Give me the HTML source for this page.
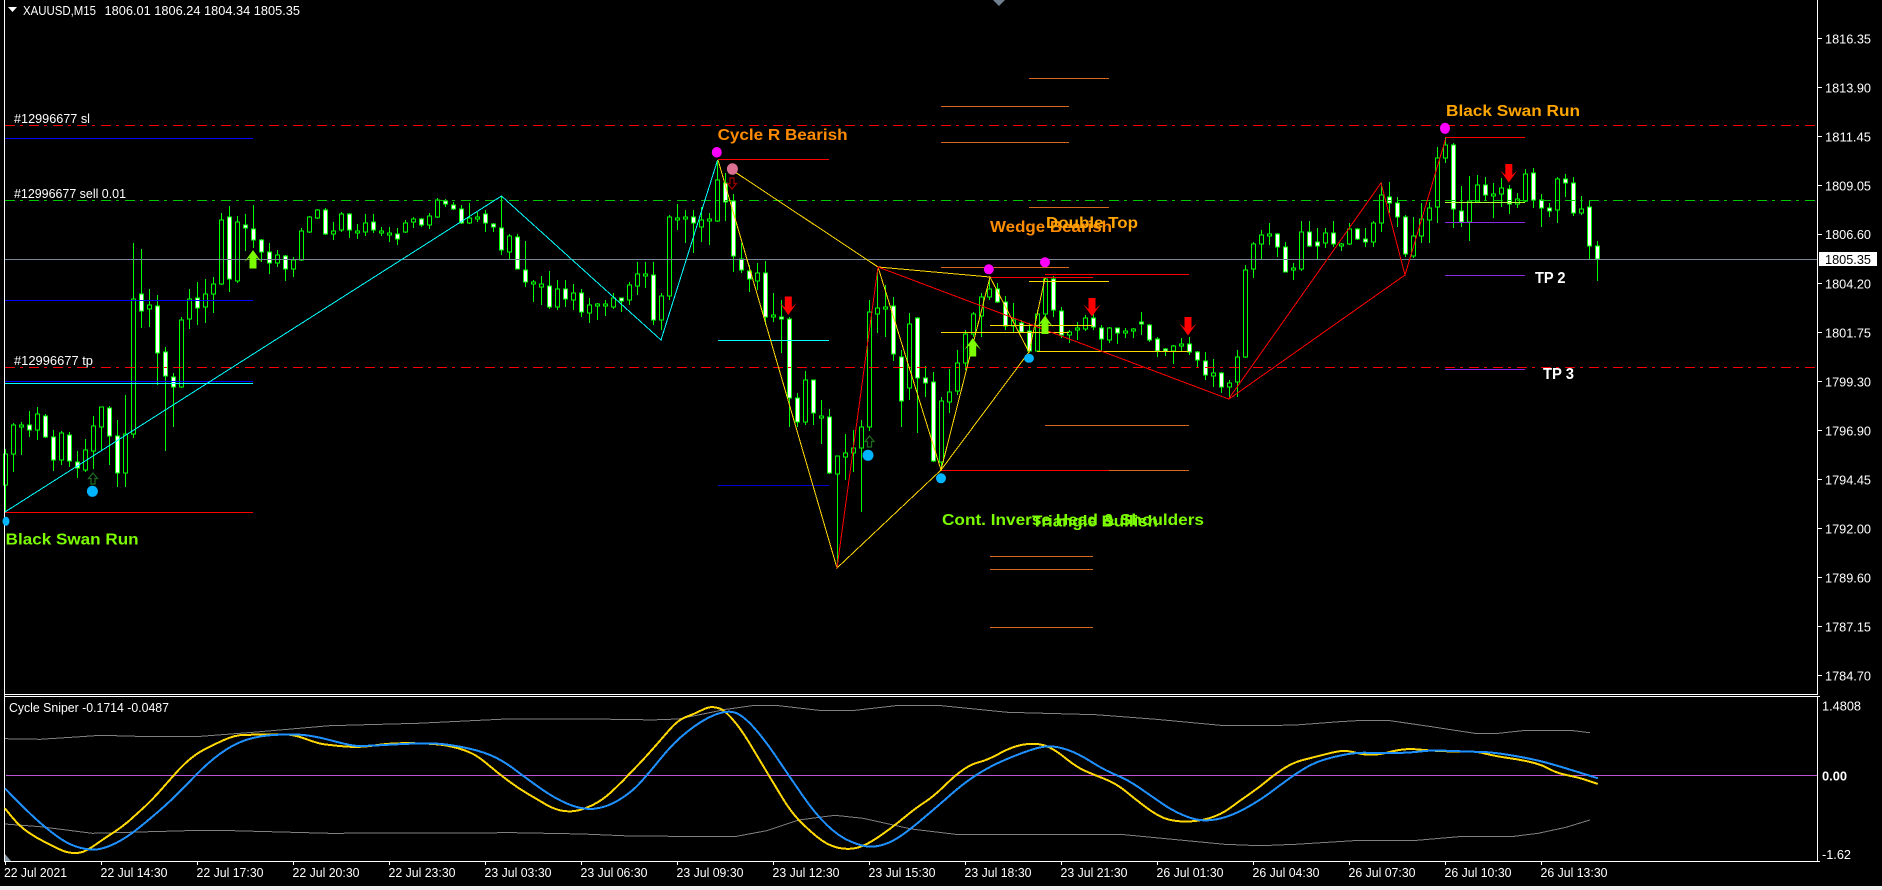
<!DOCTYPE html>
<html><head><meta charset="utf-8"><title>XAUUSD,M15</title>
<style>
html,body{margin:0;padding:0;background:#000;width:1882px;height:890px;overflow:hidden}
svg{display:block;position:absolute;left:0;top:0}
text{font-family:"Liberation Sans",sans-serif;font-size:13px;fill:#fff}
.b{font-weight:bold;font-size:15.5px}
</style></head><body>
<svg width="1882" height="890" viewBox="0 0 1882 890" xmlns="http://www.w3.org/2000/svg">
<rect width="1882" height="890" fill="#000"/>
<rect x="0" y="886" width="1882" height="4" fill="#f0f0f0"/>
<g shape-rendering="crispEdges" fill="none">
<!-- candle wicks -->
<path stroke="#00ff00" d="M5.5 449V512M13.5 423V472M21.5 422V455M29.5 411V437M37.5 407V440M45.5 414V438M53.5 430V471M61.5 431V465M69.5 432V467M77.5 451V478M85.5 439V472M93.5 416V469M101.5 407V450M109.5 406V465M117.5 420V487M125.5 395V487M133.5 243V438M141.5 249V328M149.5 289V327M157.5 295V385M165.5 347V451M173.5 373V427M181.5 317V388M189.5 289V329M197.5 282V325M205.5 279V323M213.5 277V313M221.5 213V285M229.5 206V292M237.5 216V283M245.5 214V251M253.5 205V248M261.5 239V262M269.5 243V274M277.5 250V267M285.5 255V281M293.5 257V277M301.5 228V261M309.5 216V233M317.5 209V219M325.5 208V235M333.5 222V240M341.5 212V232M349.5 213V238M357.5 224V239M365.5 214V236M373.5 214V233M381.5 227V236M389.5 227V242M397.5 228V245M405.5 220V233M413.5 217V228M421.5 218V227M429.5 213V229M437.5 198V218M445.5 199V207M453.5 202V210M461.5 205V224M469.5 203V224M477.5 212V222M485.5 210V232M493.5 223V232M501.5 196V255M509.5 234V259M517.5 234V269M525.5 241V287M533.5 280V302M541.5 276V305M549.5 271V309M557.5 280V310M565.5 280V307M573.5 284V310M581.5 289V317M589.5 298V323M597.5 303V320M605.5 300V316M613.5 293V309M621.5 298V312M629.5 282V305M637.5 262V295M645.5 262V288M653.5 262V325M661.5 293V330M669.5 215V300M677.5 204V230M685.5 210V243M693.5 210V253M701.5 207V242M709.5 213V245M717.5 160V222M725.5 173V221M733.5 194V272M741.5 243V273M749.5 265V292M757.5 263V290M765.5 261V325M773.5 293V322M781.5 300V353M789.5 317V427M797.5 393V427M805.5 371V425M813.5 380V425M821.5 400V444M829.5 409V474M837.5 456V567M845.5 434V480M853.5 430V472M861.5 420V512M869.5 300V431M877.5 272V333M885.5 285V337M893.5 297V361M901.5 350V427M909.5 313V400M917.5 317V433M925.5 366V397M933.5 372V462M941.5 397V470M949.5 369V413M957.5 350V395M965.5 330V370M973.5 312V337M981.5 293V337M989.5 278V300M997.5 283V303M1005.5 296V330M1013.5 303V333M1021.5 320V333M1029.5 323V352M1037.5 310V352M1045.5 278V320M1053.5 276V317M1061.5 307V338M1069.5 330V343M1077.5 322V340M1085.5 315V331M1093.5 300V330M1101.5 325V352M1109.5 327V343M1117.5 328V344M1125.5 328V338M1133.5 328V338M1141.5 312V335M1149.5 324V342M1157.5 337V357M1165.5 348V356M1173.5 345V364M1181.5 338V352M1189.5 337V355M1197.5 351V367M1205.5 352V380M1213.5 359V387M1221.5 372V393M1229.5 380V399M1237.5 350V397M1245.5 265V358M1253.5 242V278M1261.5 230V260M1269.5 223V245M1277.5 233V257M1285.5 242V272M1293.5 263V280M1301.5 221V271M1309.5 221V247M1317.5 228V259M1325.5 228V248M1333.5 221V247M1341.5 243V251M1349.5 223V245M1357.5 228V240M1365.5 228V247M1373.5 221V247M1381.5 183V232M1389.5 182V213M1397.5 197V227M1405.5 215V257M1413.5 217V258M1421.5 203V243M1429.5 202V243M1437.5 147V223M1445.5 138V163M1453.5 143V228M1461.5 186V227M1469.5 176V241M1477.5 175V203M1485.5 177V200M1493.5 183V218M1501.5 178V207M1509.5 185V214M1517.5 193V208M1525.5 169V202M1533.5 168V208M1541.5 194V227M1549.5 203V217M1557.5 177V223M1565.5 174V197M1573.5 177V216M1581.5 196V215M1589.5 200V259M1597.5 241V281"/>
<!-- bull bodies -->
<path stroke="#00ff00" fill="#000" d="M3.5 454h4v31h-4zM11.5 425h4v29h-4zM19.5 425h4v2h-4zM35.5 414h4v16h-4zM59.5 433h4v27h-4zM83.5 450h4v20h-4zM91.5 426h4v25h-4zM99.5 407h4v20h-4zM123.5 434h4v39h-4zM131.5 299h4v135h-4zM147.5 305h4v4h-4zM179.5 320h4v67h-4zM187.5 299h4v20h-4zM203.5 294h4v13h-4zM211.5 284h4v10h-4zM219.5 220h4v64h-4zM235.5 222h4v59h-4zM275.5 255h4v8h-4zM291.5 260h4v9h-4zM299.5 231h4v29h-4zM307.5 217h4v15h-4zM315.5 210h4v8h-4zM331.5 231h4v3h-4zM339.5 214h4v16h-4zM355.5 231h4v2h-4zM363.5 223h4v9h-4zM379.5 231h4v2h-4zM387.5 233h4v2h-4zM403.5 223h4v9h-4zM411.5 219h4v3h-4zM427.5 216h4v9h-4zM435.5 200h4v17h-4zM467.5 218h4v5h-4zM475.5 217h4v2h-4zM507.5 236h4v16h-4zM531.5 282h4v2h-4zM539.5 284h4v3h-4zM555.5 289h4v18h-4zM571.5 293h4v7h-4zM587.5 305h4v8h-4zM595.5 304h4v2h-4zM603.5 304h4v2h-4zM611.5 298h4v9h-4zM627.5 285h4v15h-4zM635.5 274h4v12h-4zM643.5 274h4v2h-4zM659.5 296h4v24h-4zM667.5 217h4v79h-4zM675.5 218h4v2h-4zM683.5 217h4v2h-4zM699.5 220h4v7h-4zM707.5 219h4v2h-4zM715.5 180h4v41h-4zM755.5 273h4v8h-4zM771.5 315h4v2h-4zM803.5 380h4v42h-4zM819.5 416h4v2h-4zM835.5 456h4v18h-4zM843.5 453h4v4h-4zM851.5 448h4v5h-4zM859.5 427h4v21h-4zM867.5 312h4v115h-4zM875.5 308h4v6h-4zM883.5 307h4v2h-4zM907.5 324h4v64h-4zM939.5 401h4v61h-4zM947.5 392h4v10h-4zM955.5 363h4v28h-4zM963.5 334h4v29h-4zM971.5 314h4v20h-4zM979.5 297h4v19h-4zM987.5 289h4v8h-4zM1011.5 320h4v6h-4zM1035.5 314h4v37h-4zM1043.5 279h4v35h-4zM1067.5 332h4v3h-4zM1075.5 328h4v2h-4zM1083.5 318h4v11h-4zM1107.5 328h4v12h-4zM1123.5 331h4v2h-4zM1131.5 329h4v2h-4zM1171.5 346h4v5h-4zM1179.5 344h4v2h-4zM1211.5 373h4v3h-4zM1227.5 383h4v4h-4zM1235.5 357h4v25h-4zM1243.5 270h4v87h-4zM1251.5 244h4v25h-4zM1259.5 235h4v9h-4zM1267.5 234h4v2h-4zM1291.5 268h4v2h-4zM1299.5 232h4v37h-4zM1323.5 233h4v10h-4zM1339.5 244h4v2h-4zM1347.5 229h4v15h-4zM1371.5 223h4v19h-4zM1379.5 195h4v28h-4zM1411.5 236h4v20h-4zM1419.5 219h4v17h-4zM1427.5 208h4v12h-4zM1435.5 158h4v49h-4zM1443.5 145h4v13h-4zM1467.5 201h4v21h-4zM1475.5 185h4v17h-4zM1491.5 194h4v2h-4zM1499.5 188h4v6h-4zM1515.5 199h4v5h-4zM1523.5 174h4v27h-4zM1555.5 179h4v31h-4zM1579.5 209h4v4h-4z"/>
<!-- bear bodies -->
<path stroke="#00ff00" fill="#fff" d="M27.5 425h4v5h-4zM43.5 416h4v21h-4zM51.5 437h4v23h-4zM67.5 435h4v26h-4zM75.5 462h4v6h-4zM107.5 408h4v28h-4zM115.5 436h4v37h-4zM139.5 294h4v17h-4zM155.5 306h4v47h-4zM163.5 352h4v24h-4zM171.5 377h4v10h-4zM195.5 298h4v10h-4zM227.5 217h4v62h-4zM243.5 225h4v3h-4zM251.5 229h4v11h-4zM259.5 240h4v12h-4zM267.5 252h4v11h-4zM283.5 256h4v13h-4zM323.5 210h4v24h-4zM347.5 214h4v16h-4zM371.5 222h4v8h-4zM395.5 234h4v5h-4zM419.5 219h4v6h-4zM443.5 201h4v3h-4zM451.5 205h4v4h-4zM459.5 209h4v14h-4zM483.5 214h4v9h-4zM491.5 224h4v3h-4zM499.5 228h4v22h-4zM515.5 237h4v32h-4zM523.5 270h4v12h-4zM547.5 286h4v21h-4zM563.5 289h4v10h-4zM579.5 293h4v19h-4zM619.5 298h4v3h-4zM651.5 275h4v45h-4zM691.5 217h4v6h-4zM723.5 183h4v19h-4zM731.5 201h4v55h-4zM739.5 259h4v11h-4zM747.5 271h4v8h-4zM763.5 273h4v44h-4zM779.5 317h4v2h-4zM787.5 319h4v79h-4zM795.5 398h4v24h-4zM811.5 380h4v33h-4zM827.5 417h4v56h-4zM891.5 306h4v48h-4zM899.5 357h4v44h-4zM915.5 318h4v60h-4zM923.5 378h4v5h-4zM931.5 382h4v79h-4zM995.5 289h4v13h-4zM1003.5 302h4v24h-4zM1019.5 323h4v9h-4zM1027.5 331h4v20h-4zM1051.5 279h4v31h-4zM1059.5 311h4v24h-4zM1091.5 318h4v9h-4zM1099.5 328h4v11h-4zM1115.5 328h4v5h-4zM1139.5 322h4v2h-4zM1147.5 325h4v15h-4zM1155.5 339h4v12h-4zM1163.5 349h4v2h-4zM1187.5 344h4v8h-4zM1195.5 352h4v8h-4zM1203.5 361h4v14h-4zM1219.5 373h4v14h-4zM1275.5 234h4v13h-4zM1283.5 247h4v25h-4zM1307.5 232h4v14h-4zM1315.5 242h4v4h-4zM1331.5 233h4v11h-4zM1355.5 229h4v10h-4zM1363.5 239h4v3h-4zM1387.5 197h4v6h-4zM1395.5 203h4v14h-4zM1403.5 217h4v37h-4zM1451.5 145h4v64h-4zM1459.5 211h4v11h-4zM1483.5 185h4v10h-4zM1507.5 189h4v15h-4zM1531.5 173h4v27h-4zM1539.5 200h4v8h-4zM1547.5 208h4v3h-4zM1563.5 179h4v4h-4zM1571.5 183h4v30h-4zM1587.5 207h4v39h-4zM1595.5 246h4v13h-4z"/>
<!-- horizontal levels -->
<path stroke="#0000ff" d="M5 138.5H253M5 300.5H253M5 381.5H253"/>
<path stroke="#00ffff" d="M5 383.5H253M718 340.5H829"/>
<path stroke="#ff0000" d="M5 512.5H253M718 159.5H829M990 277.5H1093M1045 274.5H1189M941 470.5H1109M1445 137.5H1525"/>
<path stroke="#0000cd" d="M718 485.5H829"/>
<path stroke="#d2691e" d="M1029 78.5H1109M941 106.5H1069M941 142.5H1069M1029 207.5H1109M941 267.5H1069M1045 425.5H1189M1109 470.5H1189M990 556.5H1093M990 569.5H1093M990 627.5H1093"/>
<path stroke="#ffd700" d="M1029 281.5H1109M990 325.5H1093M941 332.5H1069M1037 351.5H1189"/>
<path stroke="#adff2f" d="M1445 202.5H1525"/>
<path stroke="#8a2be2" d="M1445 222.5H1525M1445 275.5H1525M1445 369.5H1525"/>
<!-- order lines -->
<path stroke="#778899" d="M5 259.5H1817"/>
<path stroke="#ff0000" stroke-dasharray="10 5 3 6" d="M5 125.5H1817M5 367.5H1817"/>
<path stroke="#00c800" stroke-dasharray="10 5 3 6" d="M5 200.5H1817"/>
<!-- zigzags -->
<path stroke="#00ffff" d="M5 512L501.5 196L661 340L717.6 160"/>
<path stroke="#ffd700" d="M718 160L837 568L941 470L1029 352M735 172L878 267L990 277M878 267L941 470L990 277L1029 352L1045 278"/>
<path stroke="#ff0000" d="M837 568L878 267L1228.6 399L1381 183L1405 275L1445.6 139M1229 399L1405 275"/>
<!-- frame -->
<path stroke="#fff" d="M4.5 0V862M1817.5 0V694M4 694.5H1818M4 696.5H1820M1817.5 696V862M4 861.5H1818"/>
<path stroke="#fff" d="M1818 38.5h4M1818 87.5h4M1818 136.5h4M1818 185.5h4M1818 234.5h4M1818 283.5h4M1818 332.5h4M1818 381.5h4M1818 430.5h4M1818 479.5h4M1818 528.5h4M1818 577.5h4M1818 626.5h4M1818 675.5h4M1818 861.5h2M1818 696.5h2"/>
<path stroke="#fff" d="M5.5 861v4M101.5 861v4M197.5 861v4M293.5 861v4M389.5 861v4M485.5 861v4M581.5 861v4M677.5 861v4M773.5 861v4M869.5 861v4M965.5 861v4M1061.5 861v4M1157.5 861v4M1253.5 861v4M1349.5 861v4M1445.5 861v4M1541.5 861v4"/>
<!-- indicator -->
<path stroke="#ba55d3" d="M6 775.5H1817"/>
<path stroke="#808080" d="M4.8 738.7L40.2 739.3L80.4 736.7L100.4 735.3L136.6 736.3L200.9 736.3L253 732.3L329.5 725.7L417.8 723.3L506.2 719L630 719.3L650.1 720L678.2 719L726.4 709.3L754.6 705.3L778.7 705.7L818.8 710.3L855 710.3L899.2 705.3L937.4 705.3L1007.7 712.3L1096 714.7L1156.3 719.3L1224.6 725.7L1260 725.7L1295.8 725L1339.5 721.7L1363.3 720.3L1387.2 720.3L1426.9 726L1474.6 733.3L1498.5 733.3L1522.3 730.7L1570 730.3L1589.9 732.7"/>
<path stroke="#808080" d="M4.8 824L40.2 826.7L92.4 833.3L200.9 830.3L233 830.7L329.5 833.3L514.3 832.7L582.6 834L630 836L734.5 836.7L766.6 830.7L798.7 820L834.9 815.3L863 818.3L911.2 829L955.4 834.3L1120.2 834.3L1224.6 844.3L1260 845.7L1295.8 844.3L1353.4 840.7L1417 840.3L1458.7 836.7L1514.4 836.3L1538.2 833.3L1566 827.3L1589.9 820"/>
<path stroke="#ffd700" stroke-width="2" d="M4.8 808.3L12.4 817.5Q20 826.7 28.1 832.2Q36.2 837.7 44.2 841.7Q52.2 845.7 59.3 849.2Q66.3 852.7 73.4 853Q80.4 853.3 85.4 850.8Q90.4 848.3 97.5 843.3Q104.5 838.3 113.5 832.5Q122.5 826.7 130.6 819.5Q138.6 812.3 145.7 805.8Q152.7 799.3 159.7 791.3Q166.7 783.3 174.8 774.2Q182.8 765 189.9 759.2Q196.9 753.3 204.9 749.2Q212.9 745 224 740Q235 735 244 734.9Q253 734.7 263.1 734.5Q273.2 734.3 283.3 734.3Q293.3 734.3 305.4 738.8Q317.4 743.3 323.5 744.2Q329.5 745 339.5 746Q349.5 747 357.6 746.9Q365.6 746.7 377.7 745Q389.7 743.3 401.8 743.2Q413.8 743 427.9 743.7Q442 744.3 452 746.7Q462 749 470 752.5Q478 756 488.1 764.7Q498.2 773.3 508.3 780.8Q518.3 788.3 528.4 794.2Q538.4 800 545.4 804.2Q552.4 808.3 559.5 810.2Q566.5 812 574.6 811Q582.6 810 592.7 805Q602.7 800 610.7 792.5Q618.7 785 624.4 779.2Q630 773.3 638 765Q646 756.7 654 747.5Q662 738.3 670 729.2Q678 720 686 717Q694 714 700.2 710.9Q706.3 707.7 710.4 707.2Q714.4 706.7 719.4 708.4Q724.4 710 732.5 719.2Q740.5 728.3 749.6 743.3Q758.6 758.3 765.6 770Q772.6 781.7 781.7 796.7Q790.7 811.7 798.8 820Q806.8 828.3 816.9 836.7Q826.9 845 837 847.5Q847 850 856 848Q865 846 878.1 837.2Q891.2 828.3 903.3 818.3Q915.3 808.3 924.3 802.5Q933.3 796.7 944.4 785.9Q955.4 775 963.5 769.5Q971.5 764 979.6 762Q987.6 760 999.7 753.4Q1011.7 746.7 1022.8 744.7Q1033.8 742.7 1042.9 745Q1051.9 747.3 1064 757Q1076 766.7 1084 770.4Q1092 774 1104.1 778.7Q1116.1 783.3 1126.2 791.7Q1136.2 800 1146.3 807.5Q1156.3 815 1164.4 818.2Q1172.4 821.3 1184.5 821.5Q1196.5 821.7 1208.6 818.4Q1220.6 815 1230.7 807.5Q1240.7 800 1250.4 793.4Q1260 786.7 1268 780Q1275.9 773.3 1284.9 767.8Q1293.8 762.3 1302.8 760Q1311.7 757.7 1325.6 754.2Q1339.5 750.7 1344.5 750.9Q1349.4 751 1356.4 752.9Q1363.3 754.7 1371.3 754.7Q1379.2 754.7 1388.2 752.4Q1397.1 750 1404.1 749.4Q1411 748.7 1421 749.7Q1430.9 750.7 1444.8 751.2Q1458.7 751.7 1467.7 751.5Q1476.6 751.3 1485.6 753.7Q1494.5 756 1508.4 758Q1522.3 760 1532.3 762.5Q1542.2 765 1548.2 768.4Q1554.1 771.7 1560 773.4Q1566 775 1574 776.7Q1581.9 778.3 1597.8 784"/>
<path stroke="#1e90ff" stroke-width="2" d="M4.8 788.3L15.5 799.2Q26.1 810 35.2 818.4Q44.2 826.7 55.3 835Q66.3 843.3 75.4 846.3Q84.4 849.3 92.4 849.7Q100.4 850 112.5 844.7Q124.6 839.3 138.7 828Q152.7 816.7 164.8 805.9Q176.8 795 191.9 779.2Q206.9 763.3 220 753.8Q233 744.3 245.1 740.3Q257.1 736.3 269.2 735.3Q281.2 734.3 295.3 734.5Q309.4 734.7 329.5 740Q349.5 745.3 355.6 745.8Q361.6 746.3 387.7 744.8Q413.8 743.3 427.9 743.3Q442 743.3 460 746.7Q478 750 490.1 755Q502.2 760 514.3 769.2Q526.3 778.3 540.4 788.3Q554.4 798.3 568.5 804.2Q582.6 810 594.7 808.7Q606.7 807.3 618.4 800.3Q630 793.3 638 785Q646 776.7 660.1 759.2Q674.2 741.7 688.3 730.9Q702.3 720 713.4 715.4Q724.4 710.7 732.5 712Q740.5 713.3 751.6 725Q762.6 736.7 776.7 757.5Q790.7 778.3 802.8 795.8Q814.8 813.3 826.9 825Q838.9 836.7 851 841.7Q863 846.7 871.1 846.7Q879.1 846.7 889.2 842.5Q899.2 838.3 917.3 823.3Q935.3 808.3 949.4 795.8Q963.5 783.3 975.6 775.5Q987.6 767.7 999.7 762.2Q1011.7 756.7 1025.8 751.7Q1039.8 746.7 1047.9 746.4Q1055.9 746 1067 749.7Q1078 753.3 1091.1 761.7Q1104.1 770 1116.2 775Q1128.2 780 1140.3 788.4Q1152.3 796.7 1162.4 803.7Q1172.4 810.7 1184.5 815.7Q1196.5 820.7 1206.6 820.4Q1216.6 820 1226.7 816.7Q1236.7 813.3 1248.4 806.7Q1260 800 1268 794.2Q1275.9 788.3 1284.9 781.7Q1293.8 775 1302.8 769.5Q1311.7 764 1319.7 761.2Q1327.6 758.3 1341.5 755.3Q1355.4 752.3 1367.3 752.8Q1379.2 753.3 1395.1 753Q1411 752.7 1421 751.4Q1430.9 750 1450.8 750.9Q1470.7 751.7 1482.6 752Q1494.5 752.3 1516.4 756.2Q1538.2 760 1556.1 765.4Q1574 770.7 1597.8 778.3"/>
</g>
<path fill="#8a9aa8" d="M5 854L11 861H5z"/>
<!-- dots -->
<g>
<ellipse cx="716.8" cy="152.3" rx="5" ry="5.3" fill="#ff00ff"/>
<ellipse cx="732.4" cy="169" rx="5.5" ry="5.8" fill="#db7093"/>
<ellipse cx="988.8" cy="269.3" rx="5" ry="5" fill="#ff00ff"/>
<ellipse cx="1045" cy="262.3" rx="5" ry="5" fill="#ff00ff"/>
<ellipse cx="1445" cy="128.3" rx="5" ry="5.5" fill="#ff00ff"/>
<ellipse cx="92.4" cy="491.3" rx="5.5" ry="5.5" fill="#00b4ff"/>
<ellipse cx="6" cy="521.3" rx="3.5" ry="4.5" fill="#00b4ff"/>
<ellipse cx="868" cy="455.3" rx="5.5" ry="5.5" fill="#00b4ff"/>
<ellipse cx="941" cy="478.3" rx="5" ry="5" fill="#00b4ff"/>
<ellipse cx="1029" cy="358.3" rx="5" ry="4.5" fill="#00b4ff"/>
</g>
<!-- arrows -->
<g fill="#7cfc00">
<path transform="translate(253 250)" d="M0 0L8.5 12L3.5 7.5V18.5H-3.5V7.5L-8.5 12Z"/>
<path transform="translate(972.7 338)" d="M0 0L8.5 12L3.5 7.5V18.5H-3.5V7.5L-8.5 12Z"/>
<path transform="translate(1045 315.5)" d="M0 0L8.5 12L3.5 7.5V18.5H-3.5V7.5L-8.5 12Z"/>
</g>
<g fill="#ff0000">
<path transform="translate(788.3 315)" d="M0 0L8.5 -12L3.5 -7.5V-18.5H-3.5V-7.5L-8.5 -12Z"/>
<path transform="translate(1092 316.5)" d="M0 0L8.5 -12L3.5 -7.5V-18.5H-3.5V-7.5L-8.5 -12Z"/>
<path transform="translate(1188 335.5)" d="M0 0L8.5 -12L3.5 -7.5V-18.5H-3.5V-7.5L-8.5 -12Z"/>
<path transform="translate(1508.8 182.5)" d="M0 0L8.5 -12L3.5 -7.5V-18.5H-3.5V-7.5L-8.5 -12Z"/>
</g>
<g fill="none" stroke="#1f6b1f" stroke-width="1.2">
<path transform="translate(93 473)" d="M0 0L4.5 5.5H2V11H-2V5.5H-4.5Z"/>
<path transform="translate(869.5 436)" d="M0 0L4.5 5.5H2V11H-2V5.5H-4.5Z"/>
</g>
<path transform="translate(732 189)" fill="none" stroke="#a00000" stroke-width="1.2" d="M0 0L4.5 -5.5H2V-11H-2V-5.5H-4.5Z"/>
<!-- top markers -->
<path fill="#708090" d="M993 0H1005L999 6Z"/>
<path fill="#fff" d="M8 7H17L12.5 12Z"/>
<!-- chart text -->
<text x="23" y="15" textLength="73" lengthAdjust="spacingAndGlyphs">XAUUSD,M15</text>
<text x="104.5" y="15" textLength="195.5" lengthAdjust="spacingAndGlyphs">1806.01 1806.24 1804.34 1805.35</text>
<text x="14" y="123" textLength="76" lengthAdjust="spacingAndGlyphs">#12996677 sl</text>
<text x="14" y="198" textLength="112" lengthAdjust="spacingAndGlyphs">#12996677 sell 0.01</text>
<text x="14" y="365" textLength="79" lengthAdjust="spacingAndGlyphs">#12996677 tp</text>
<g class="lab">
<text class="b" x="717.6" y="140" textLength="130" lengthAdjust="spacingAndGlyphs" style="fill:#ff8c00">Cycle R Bearish</text>
<text class="b" x="990" y="232" textLength="122" lengthAdjust="spacingAndGlyphs" style="fill:#ff8c00">Wedge Bearish</text>
<text class="b" x="1046" y="228" textLength="92" lengthAdjust="spacingAndGlyphs" style="fill:#ffa500">Double Top</text>
<text class="b" x="1446" y="116" textLength="134" lengthAdjust="spacingAndGlyphs" style="fill:#ffa500">Black Swan Run</text>
<text class="b" x="5.6" y="544.5" textLength="133" lengthAdjust="spacingAndGlyphs" style="fill:#7cfc00">Black Swan Run</text>
<text class="b" x="942" y="525" textLength="262" lengthAdjust="spacingAndGlyphs" style="fill:#7cfc00">Cont. Inverse Head &amp; Shoulders</text>
<text class="b" x="1032" y="526.7" textLength="126" lengthAdjust="spacingAndGlyphs" style="fill:#7cfc00">Triangle Bullish</text>
<text class="b" x="1535" y="283" textLength="30.5" lengthAdjust="spacingAndGlyphs">TP 2</text>
<text class="b" x="1543" y="379" textLength="31" lengthAdjust="spacingAndGlyphs">TP 3</text>
</g>
<!-- price axis -->
<g>
<text x="1825" y="43.7" textLength="46" lengthAdjust="spacingAndGlyphs">1816.35</text>
<text x="1825" y="92.3" textLength="46" lengthAdjust="spacingAndGlyphs">1813.90</text>
<text x="1825" y="141.3" textLength="46" lengthAdjust="spacingAndGlyphs">1811.45</text>
<text x="1825" y="190.3" textLength="46" lengthAdjust="spacingAndGlyphs">1809.05</text>
<text x="1825" y="239" textLength="46" lengthAdjust="spacingAndGlyphs">1806.60</text>
<text x="1825" y="288.3" textLength="46" lengthAdjust="spacingAndGlyphs">1804.20</text>
<text x="1825" y="337.7" textLength="46" lengthAdjust="spacingAndGlyphs">1801.75</text>
<text x="1825" y="386.7" textLength="46" lengthAdjust="spacingAndGlyphs">1799.30</text>
<text x="1825" y="435.7" textLength="46" lengthAdjust="spacingAndGlyphs">1796.90</text>
<text x="1825" y="484.7" textLength="46" lengthAdjust="spacingAndGlyphs">1794.45</text>
<text x="1825" y="533.7" textLength="46" lengthAdjust="spacingAndGlyphs">1792.00</text>
<text x="1825" y="582.7" textLength="46" lengthAdjust="spacingAndGlyphs">1789.60</text>
<text x="1825" y="631.3" textLength="46" lengthAdjust="spacingAndGlyphs">1787.15</text>
<text x="1825" y="680.7" textLength="46" lengthAdjust="spacingAndGlyphs">1784.70</text>
<rect x="1819" y="252" width="58" height="14" fill="#fff"/>
<text x="1825" y="264" textLength="46" lengthAdjust="spacingAndGlyphs" style="fill:#000">1805.35</text>
</g>
<!-- indicator text -->
<text x="9" y="712" textLength="160" lengthAdjust="spacingAndGlyphs">Cycle Sniper -0.1714 -0.0487</text>
<text x="1822" y="710.5" textLength="39" lengthAdjust="spacingAndGlyphs">1.4808</text>
<text x="1822" y="780.5" textLength="25" lengthAdjust="spacingAndGlyphs" style="font-weight:bold">0.00</text>
<text x="1822" y="859" textLength="29" lengthAdjust="spacingAndGlyphs">-1.62</text>
<!-- time axis -->
<g>
<text x="4" y="877" textLength="63" lengthAdjust="spacingAndGlyphs">22 Jul 2021</text>
<text x="100.5" y="877" textLength="67" lengthAdjust="spacingAndGlyphs">22 Jul 14:30</text>
<text x="196.5" y="877" textLength="67" lengthAdjust="spacingAndGlyphs">22 Jul 17:30</text>
<text x="292.5" y="877" textLength="67" lengthAdjust="spacingAndGlyphs">22 Jul 20:30</text>
<text x="388.5" y="877" textLength="67" lengthAdjust="spacingAndGlyphs">22 Jul 23:30</text>
<text x="484.5" y="877" textLength="67" lengthAdjust="spacingAndGlyphs">23 Jul 03:30</text>
<text x="580.5" y="877" textLength="67" lengthAdjust="spacingAndGlyphs">23 Jul 06:30</text>
<text x="676.5" y="877" textLength="67" lengthAdjust="spacingAndGlyphs">23 Jul 09:30</text>
<text x="772.5" y="877" textLength="67" lengthAdjust="spacingAndGlyphs">23 Jul 12:30</text>
<text x="868.5" y="877" textLength="67" lengthAdjust="spacingAndGlyphs">23 Jul 15:30</text>
<text x="964.5" y="877" textLength="67" lengthAdjust="spacingAndGlyphs">23 Jul 18:30</text>
<text x="1060.5" y="877" textLength="67" lengthAdjust="spacingAndGlyphs">23 Jul 21:30</text>
<text x="1156.5" y="877" textLength="67" lengthAdjust="spacingAndGlyphs">26 Jul 01:30</text>
<text x="1252.5" y="877" textLength="67" lengthAdjust="spacingAndGlyphs">26 Jul 04:30</text>
<text x="1348.5" y="877" textLength="67" lengthAdjust="spacingAndGlyphs">26 Jul 07:30</text>
<text x="1444.5" y="877" textLength="67" lengthAdjust="spacingAndGlyphs">26 Jul 10:30</text>
<text x="1540.5" y="877" textLength="67" lengthAdjust="spacingAndGlyphs">26 Jul 13:30</text>
</g>
</svg>
</body></html>
